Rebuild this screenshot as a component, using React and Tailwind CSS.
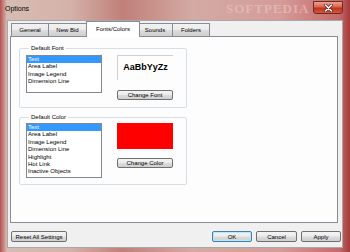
import React from 'react';

const tabs = [
  { label: 'General', w: 'w-[38px]' },
  { label: 'New Bid', w: 'w-[39px]' },
  { label: 'Fonts/Colors', w: 'w-[54px]', active: true },
  { label: 'Sounds', w: 'w-[36px]' },
  { label: 'Folders', w: 'w-[38px]' },
];

const fontItems = ['Text', 'Area Label', 'Image Legend', 'Dimension Line'];
const colorItems = ['Text', 'Area Label', 'Image Legend', 'Dimension Line', 'Highlight', 'Hot Link', 'Inactive Objects'];

const btn =
  'flex items-center justify-center rounded-[2px] border text-[6px] leading-none text-black bg-[linear-gradient(180deg,#f4f4f4_0%,#ebebeb_48%,#dcdcdc_52%,#cfcfcf_100%)]';

const ListBox = ({ items, h }) => (
  <div className={`w-[76px] ${h} border border-[#828790] bg-white`}>
    {items.map((item, i) => (
      <div
        key={item}
        className={`h-[7.4px] pl-[1px] text-[6px] leading-[7.4px] whitespace-nowrap ${
          i === 0 ? 'bg-[#3399ff] text-white' : 'text-black'
        }`}
      >
        {item}
      </div>
    ))}
  </div>
);

const Group = ({ title, className = '', children }) => (
  <fieldset className={`w-[168px] rounded-[2px] border border-[#d5dfe5] ${className}`}>
    <legend className="ml-[3px] px-[2px] text-[6px] leading-[7px] text-black">{title}</legend>
    {children}
  </fieldset>
);

const App = () => {
  return (
    <div className="relative w-[350px] h-[252px] overflow-hidden flex flex-col font-['Liberation_Sans',Arial,sans-serif] bg-[linear-gradient(90deg,#b65050_0%,#d7bcb3_2%,#d4b2aa_20%,#c08078_35%,#d3aaa4_55%,#d59c98_80%,#c46a6a_97%,#a83a3a_100%)]">
      {/* title bar */}
      <div className="relative h-[20px] flex items-start justify-between pl-[5px] pr-[7px]">
        <span className="mt-[5px] text-[7px] leading-none text-black">Options</span>
        <span className="absolute left-[226px] top-[2px] text-[13px] font-bold leading-none tracking-[1px] text-[#eec4c4]/60 font-['Liberation_Serif',serif]">
          SOFTPEDIA
        </span>
        <div className="relative mt-[1px] w-[30px] h-[13px] rounded-b-[3px] border border-[#6b2a26] bg-[linear-gradient(180deg,#eba391_0%,#d8644f_45%,#c1301c_55%,#d25a3c_100%)] flex items-center justify-center">
          <svg width="9" height="8" viewBox="0 0 9 8">
            <path d="M1.5 1 L7.5 7 M7.5 1 L1.5 7" stroke="#3a1010" strokeWidth="2.6" strokeLinecap="round" />
            <path d="M1.5 1 L7.5 7 M7.5 1 L1.5 7" stroke="#ffffff" strokeWidth="1.6" strokeLinecap="round" />
          </svg>
        </div>
      </div>

      {/* client area */}
      <div className="mx-[7px] mb-[4px] flex-1 flex flex-col border border-[#a8a8a8] bg-[#f0f0f0]">
        {/* tab strip */}
        <div className="relative z-10 -mb-px flex items-end h-[16px] pl-[3px]">
          {tabs.map((t, i) => (
            <div
              key={t.label}
              className={`${t.w} ${i > 0 ? '-ml-px' : ''} flex items-center justify-center border border-b-0 border-[#898c95] text-[6px] leading-none text-black ${
                t.active
                  ? 'relative z-10 h-[16px] -mx-[2px] bg-white pb-[2px]'
                  : 'h-[13px] mb-px bg-[linear-gradient(180deg,#f2f2f2_0%,#ebebeb_50%,#dddddd_51%,#cfcfcf_100%)]'
              }`}
            >
              {t.label}
            </div>
          ))}
        </div>

        {/* tab panel */}
        <div className="ml-[2px] w-[328px] h-[187px] border border-[#898c95] bg-[#fdfdfd] pt-[8px] pl-[8px]">
          <Group title="Default Font" className="pl-[6px] pt-[3px] pb-[7px]">
            <div className="flex gap-[15px]">
              <ListBox items={fontItems} h="h-[38px]" />
              <div className="flex flex-col gap-[10px]">
                <div className="w-[56px] h-[25px] border-t border-l border-[#d0d0d0] flex items-center justify-center text-[9px] font-bold text-black">
                  AaBbYyZz
                </div>
                <div className={`${btn} border-[#707070] w-[56px] h-[10px]`}>Change Font</div>
              </div>
            </div>
          </Group>

          <Group title="Default Color" className="mt-[6px] pl-[6px] pt-[2px] pb-[6px]">
            <div className="flex gap-[15px]">
              <ListBox items={colorItems} h="h-[55px]" />
              <div className="flex flex-col gap-[9px]">
                <div className="w-[56px] h-[26px] bg-[#ff0000]" />
                <div className={`${btn} border-[#707070] w-[56px] h-[10px]`}>Change Color</div>
              </div>
            </div>
          </Group>
        </div>

        {/* bottom buttons */}
        <div className="mt-[8px] flex items-center pl-[3px] w-[333px]">
          <div className={`${btn} border-[#707070] w-[56px] h-[11px]`}>Reset All Settings</div>
          <div className="ml-auto flex gap-[4px]">
            <div className={`${btn} border-[#3c7fb1] shadow-[inset_0_0_0_1px_#bfe3f7] w-[40px] h-[11px]`}>OK</div>
            <div className={`${btn} border-[#707070] w-[41px] h-[11px]`}>Cancel</div>
            <div className={`${btn} border-[#707070] w-[40px] h-[11px]`}>Apply</div>
          </div>
        </div>
      </div>
    </div>
  );
};

export default App;
